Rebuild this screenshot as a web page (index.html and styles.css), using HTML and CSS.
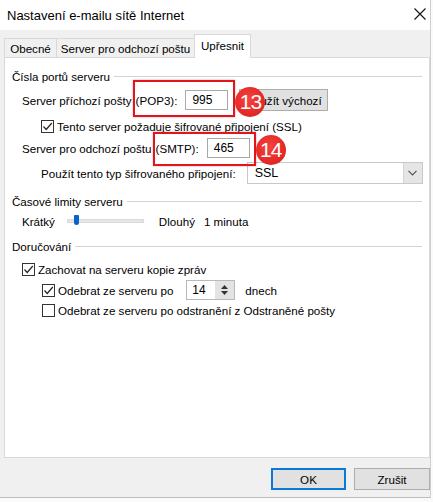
FILE: index.html
```html
<!DOCTYPE html>
<html lang="cs">

<head>
    <meta charset="UTF-8">
    <meta name="viewport" content="width=device-width, initial-scale=1.0">
    <title>Nastavení e-mailu sítě Internet</title>
    <link rel="stylesheet" href="styles.css">
</head>

<body>
    <div class="dialog">
        <div class="titlebar">
            <span class="title">Nastavení e-mailu sítě Internet</span>
            <svg class="close" width="12" height="12" viewBox="0 0 12 12">
                <path d="M0.5 0.5 L11.5 11.5 M11.5 0.5 L0.5 11.5" stroke="#111" stroke-width="1.1" fill="none" />
            </svg>
        </div>

        <div class="tabs">
            <div class="tab tab-general">Obecné</div>
            <div class="tab tab-outgoing">Server pro odchozí poštu</div>
            <div class="tab tab-advanced active">Upřesnit</div>
        </div>

        <div class="panel">
            <div class="group group-ports"><span>Čísla portů serveru</span></div>

            <div class="row row-pop">
                <span>Server příchozí pošty</span>
                <span class="callout callout-pop">
                    <span>(POP3):</span>
                    <span class="field field-port">995</span>
                    <span class="badge">13</span>
                </span>
                <span class="btn btn-default">Použít výchozí</span>
            </div>

            <div class="row row-ssl">
                <span class="check checked"><svg width="11" height="11" viewBox="0 0 11 11"><polyline points="1.5,5.5 4.2,8.5 9.8,2" fill="none" stroke="#222" stroke-width="1.2" /></svg></span>
                <span>Tento server požaduje šifrované připojení (SSL)</span>
            </div>

            <div class="row row-smtp">
                <span>Server pro odchozí poštu</span>
                <span class="callout callout-smtp">
                    <span>(SMTP):</span>
                    <span class="field field-port">465</span>
                    <span class="badge">14</span>
                </span>
            </div>

            <div class="row row-enc">
                <span>Použít tento typ šifrovaného připojení:</span>
                <span class="select">
                    <span class="select-value">SSL</span>
                    <span class="select-arrow"><svg width="9" height="6" viewBox="0 0 9 6"><polyline points="0.5,0.8 4.5,4.8 8.5,0.8" fill="none" stroke="#555" stroke-width="1.2" /></svg></span>
                </span>
            </div>

            <div class="group group-timeout"><span>Časové limity serveru</span></div>

            <div class="row row-slider">
                <span>Krátký</span>
                <span class="track"><span class="thumb"></span></span>
                <span class="long">Dlouhý</span>
                <span class="minutes">1 minuta</span>
            </div>

            <div class="group group-delivery"><span>Doručování</span></div>

            <div class="row row-keep">
                <span class="check checked"><svg width="11" height="11" viewBox="0 0 11 11"><polyline points="1.5,5.5 4.2,8.5 9.8,2" fill="none" stroke="#222" stroke-width="1.2" /></svg></span>
                <span>Zachovat na serveru kopie zpráv</span>
            </div>

            <div class="row row-remove">
                <span class="check checked"><svg width="11" height="11" viewBox="0 0 11 11"><polyline points="1.5,5.5 4.2,8.5 9.8,2" fill="none" stroke="#222" stroke-width="1.2" /></svg></span>
                <span>Odebrat ze serveru po</span>
                <span class="spin">
                    <span class="spin-value">14</span>
                    <span class="spin-arrows">
                        <svg width="7" height="4" viewBox="0 0 7 4"><polygon points="0,4 3.5,0 7,4" fill="#333" /></svg>
                        <svg width="7" height="4" viewBox="0 0 7 4"><polygon points="0,0 3.5,4 7,0" fill="#333" /></svg>
                    </span>
                </span>
                <span class="days">dnech</span>
            </div>

            <div class="row row-deleted">
                <span class="check"></span>
                <span>Odebrat ze serveru po odstranění z Odstraněné pošty</span>
            </div>
        </div>

        <div class="footer">
            <span class="btn btn-ok">OK</span>
            <span class="btn btn-cancel">Zrušit</span>
        </div>
    </div>
</body>

</html>
```

FILE: styles.css
```css
* {
    padding: 0;
    margin: 0;
    box-sizing: border-box;
}

body {
    background-color: #fafafa;
    font-family: "Liberation Sans", Arial, sans-serif;
    font-size: 11.6px;
    color: #000;
}

.dialog {
    width: 431px;
    height: 498px;
    display: flex;
    flex-direction: column;
    background-color: #f0f0f0;
    border-right: 1px solid #cfcfcf;
    border-bottom: 1px solid #bdbdbd;
}

/* title bar */
.titlebar {
    height: 30px;
    display: flex;
    align-items: center;
    justify-content: space-between;
    padding: 0 4px 0 7px;
    background-color: #fff;
    font-size: 13px;
}

.close {
    margin-top: -2px;
}

/* tabs */
.tabs {
    height: 27px;
    display: flex;
    align-items: flex-end;
    padding-left: 4px;
}

.tab {
    height: 19px;
    display: flex;
    align-items: center;
    justify-content: center;
    border: 1px solid #d9d9d9;
    border-bottom: none;
    background-color: #f0f0f0;
}

.tab + .tab {
    margin-left: -1px;
}

.tab-general {
    width: 53px;
}

.tab-outgoing {
    width: 139px;
}

.tab-advanced {
    width: 57px;
}

.tab.active {
    height: 24px;
    margin-bottom: -1px;
    padding-bottom: 2px;
    background-color: #fff;
    position: relative;
    z-index: 1;
}

/* panel */
.panel {
    width: 426px;
    height: 401px;
    margin-left: 4px;
    background-color: #fff;
    border: 1px solid #d9d9d9;
}

.group {
    height: 20px;
    display: flex;
    align-items: center;
    padding-left: 7px;
    padding-right: 7px;
}

.group::after {
    content: "";
    flex: 1;
    height: 1px;
    margin-left: 4px;
    margin-top: 1px;
    background-color: #d3d3d3;
}

.group-ports {
    margin-top: 8px;
}

.group-timeout {
    margin-top: 7px;
}

.group-delivery {
    margin-top: 5px;
}

.row {
    height: 20px;
    display: flex;
    align-items: center;
    padding-left: 17px;
}

.row-pop {
    margin-top: 4px;
}

.row-ssl {
    margin-top: 6px;
    padding-left: 36px;
}

.row-smtp {
    margin-top: 2px;
}

.row-enc {
    height: 22px;
    margin-top: 4px;
    padding-left: 36px;
}

.row-slider {
    margin-top: 0;
}

.row-keep {
    margin-top: 3px;
}

.row-remove {
    margin-top: 1px;
    padding-left: 37px;
}

.row-deleted {
    padding-left: 37px;
}

/* controls */
.check {
    width: 13px;
    height: 13px;
    margin-right: 3px;
    display: flex;
    align-items: center;
    justify-content: center;
    border: 1px solid #333;
    background-color: #fff;
}

.field {
    height: 20px;
    display: flex;
    align-items: center;
    padding-left: 6px;
    border: 1px solid #a8a8a8;
    background-color: #fff;
    font-size: 12px;
}

.field-port {
    width: 43px;
}

.btn {
    height: 22px;
    display: flex;
    align-items: center;
    justify-content: center;
    border: 1px solid #adadad;
    background-color: #e1e1e1;
}

.btn-default {
    width: 89px;
    margin-left: 11px;
}

.select {
    width: 176px;
    height: 22px;
    margin-left: 11px;
    display: flex;
    align-items: center;
    border: 1px solid #c8c8c8;
    background-color: #fff;
}

.select-value {
    flex: 1;
    padding-left: 7px;
    font-size: 12.5px;
}

.select-arrow {
    width: 19px;
    height: 20px;
    display: flex;
    align-items: center;
    justify-content: center;
    background-color: #e5e5e5;
    border-left: 1px solid #d4d4d4;
}

.track {
    width: 77px;
    height: 4px;
    margin-left: 12px;
    position: relative;
    background-color: #e6e6e6;
    border: 1px solid #dadada;
}

.thumb {
    position: absolute;
    left: 6px;
    top: -5px;
    width: 5px;
    height: 10px;
    border-radius: 1px 1px 3px 3px;
    background-color: #0a64c8;
}

.long {
    margin-left: 15px;
}

.minutes {
    margin-left: 9px;
}

.spin {
    width: 49px;
    height: 20px;
    margin-left: 13px;
    display: flex;
    border: 1px solid #b9b9b9;
    background-color: #fff;
}

.spin-value {
    flex: 1;
    display: flex;
    align-items: center;
    padding-left: 5px;
    font-size: 12px;
}

.spin-arrows {
    width: 19px;
    display: flex;
    flex-direction: column;
    align-items: center;
    justify-content: center;
    gap: 2px;
    background-color: #e3e3e3;
}

.days {
    margin-left: 10px;
}

/* annotations drawn over the dialog */
.callout {
    position: relative;
    display: flex;
    align-items: center;
    gap: 8px;
    margin-left: 4px;
}

.callout::before {
    content: "";
    position: absolute;
    border: 2px solid #e3141c;
    box-shadow: 0 0 2px rgba(120, 0, 0, 0.35);
}

.callout-pop::before {
    top: -10px;
    bottom: -7px;
    left: -3px;
    right: -7px;
}

.callout-smtp::before {
    top: -6px;
    bottom: -8px;
    left: -3px;
    right: -6px;
}

.badge {
    position: absolute;
    top: -3px;
    left: calc(100% + 7px);
    width: 30px;
    height: 30px;
    border-radius: 50%;
    display: flex;
    align-items: center;
    justify-content: center;
    background: radial-gradient(circle at 45% 40%, #f5433f 0%, #e52a27 60%, #c91f1d 100%);
    color: #fff;
    font-size: 21px;
    letter-spacing: -1px;
    z-index: 2;
}

.callout-smtp .badge {
    left: calc(100% + 6px);
}

/* footer */
.footer {
    display: flex;
    justify-content: flex-end;
    gap: 8px;
    margin-top: 10px;
}

.btn-ok {
    width: 75px;
    border: 2px solid #0a78d7;
}

.btn-cancel {
    width: 76px;
}
```
